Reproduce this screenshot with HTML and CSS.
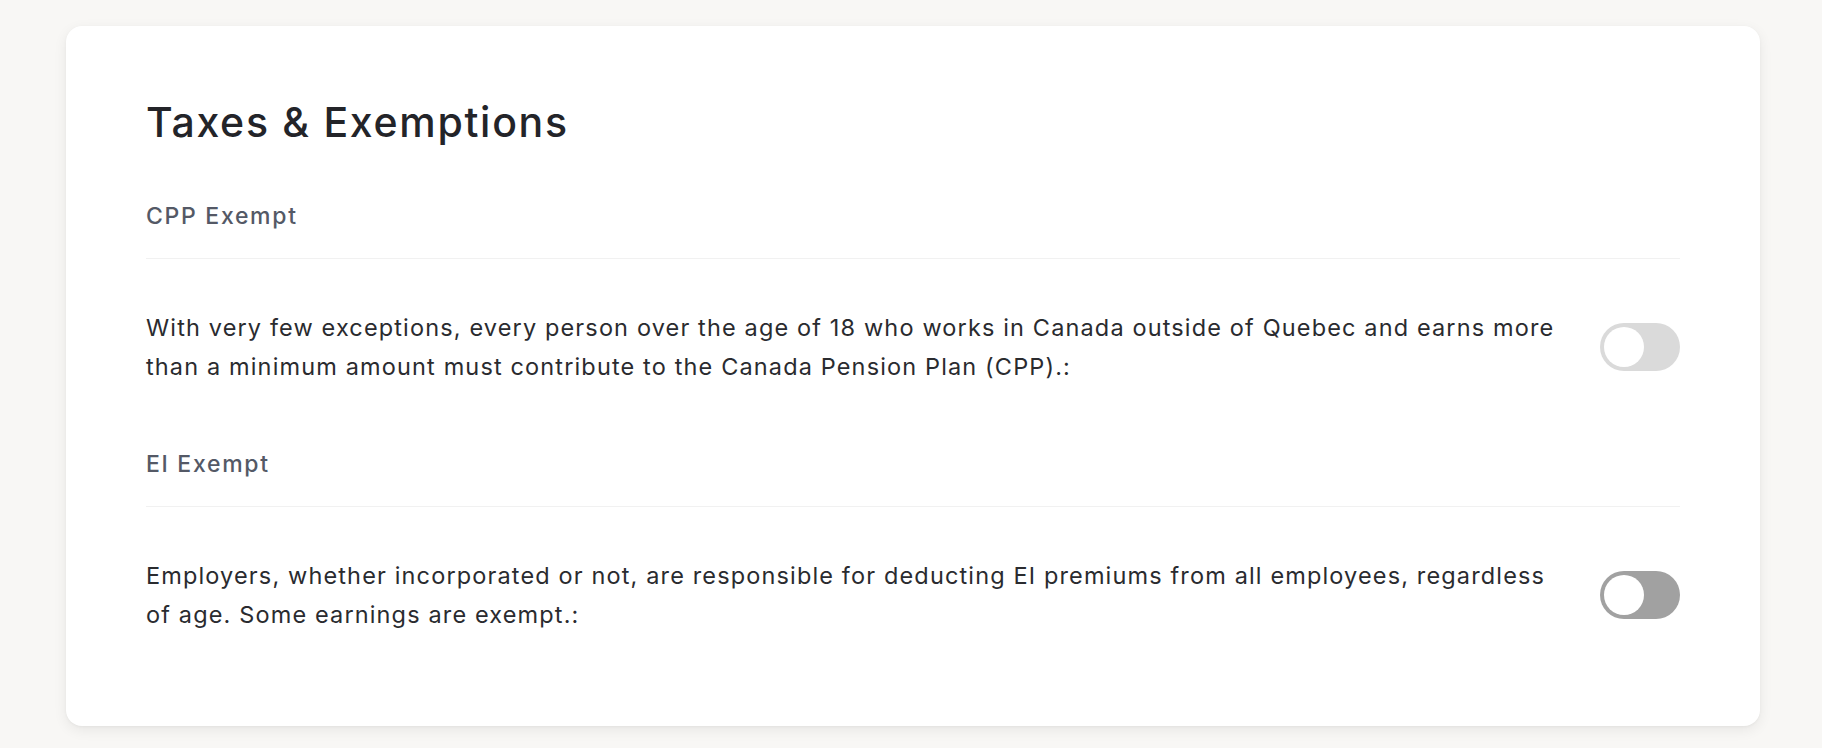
FILE: index.html
```html
<!DOCTYPE html>
<html lang="en">
<head>
<meta charset="utf-8">
<title>Taxes &amp; Exemptions</title>
<link rel="stylesheet" href="styles.css">
</head>
<body>
<main class="page">
  <section class="card">
    <h1 class="title">Taxes &amp; Exemptions</h1>
    <div class="section">
      <div class="label">CPP Exempt</div>
      <div class="row">
        <p class="desc">With very few exceptions, every person over the age of 18 who works in Canada outside of Quebec and earns more than a minimum amount must contribute to the Canada Pension Plan (CPP).:</p>
        <span class="toggle toggle-light"><span class="knob"></span></span>
      </div>
    </div>
    <div class="section">
      <div class="label">EI Exempt</div>
      <div class="row">
        <p class="desc">Employers, whether incorporated or not, are responsible for deducting EI premiums from all employees, regardless of age. Some earnings are exempt.:</p>
        <span class="toggle toggle-dark"><span class="knob"></span></span>
      </div>
    </div>
  </section>
</main>
</body>
</html>
```
FILE: styles.css
```css
* { box-sizing: border-box; }
html, body { margin: 0; padding: 0; }
body {
  background: #f8f7f5;
  font-family: Inter, "Noto Sans", "Liberation Sans", sans-serif;
  color: #2a2b2f;
}
.page {
  padding: 26px 62px 22px 66px;
}
.card {
  background: #ffffff;
  border-radius: 16px;
  box-shadow: 0 4px 14px rgba(0, 0, 0, 0.07), 0 1px 3px rgba(0, 0, 0, 0.04);
  padding: 72px 80px 80px 80px;
}
.title {
  margin: 0 0 54px 0;
  font-size: 41px;
  line-height: 48px;
  font-weight: 500;
  color: #232429;
  letter-spacing: 1.7px;
}
.section + .section {
  margin-top: 50px;
}
.label {
  font-size: 23px;
  line-height: 32px;
  font-weight: 500;
  color: #545966;
  letter-spacing: 1.7px;
  padding-bottom: 26px;
  border-bottom: 1px solid #f1f1f1;
}
.row {
  display: flex;
  align-items: center;
  gap: 36px;
  padding: 49px 0 12px 0;
}
.desc {
  flex: 1;
  margin: 0;
  font-size: 23.5px;
  line-height: 39px;
  font-weight: 400;
  letter-spacing: 1.14px;
  color: #2a2b2f;
}
.toggle {
  flex: none;
  width: 80px;
  height: 48px;
  border-radius: 24px;
  padding: 4px;
  display: flex;
  align-items: center;
}
.toggle-light { background: #dadada; }
.toggle-dark { background: #a1a1a1; }
.knob {
  width: 40px;
  height: 40px;
  border-radius: 50%;
  background: #ffffff;
}
```
